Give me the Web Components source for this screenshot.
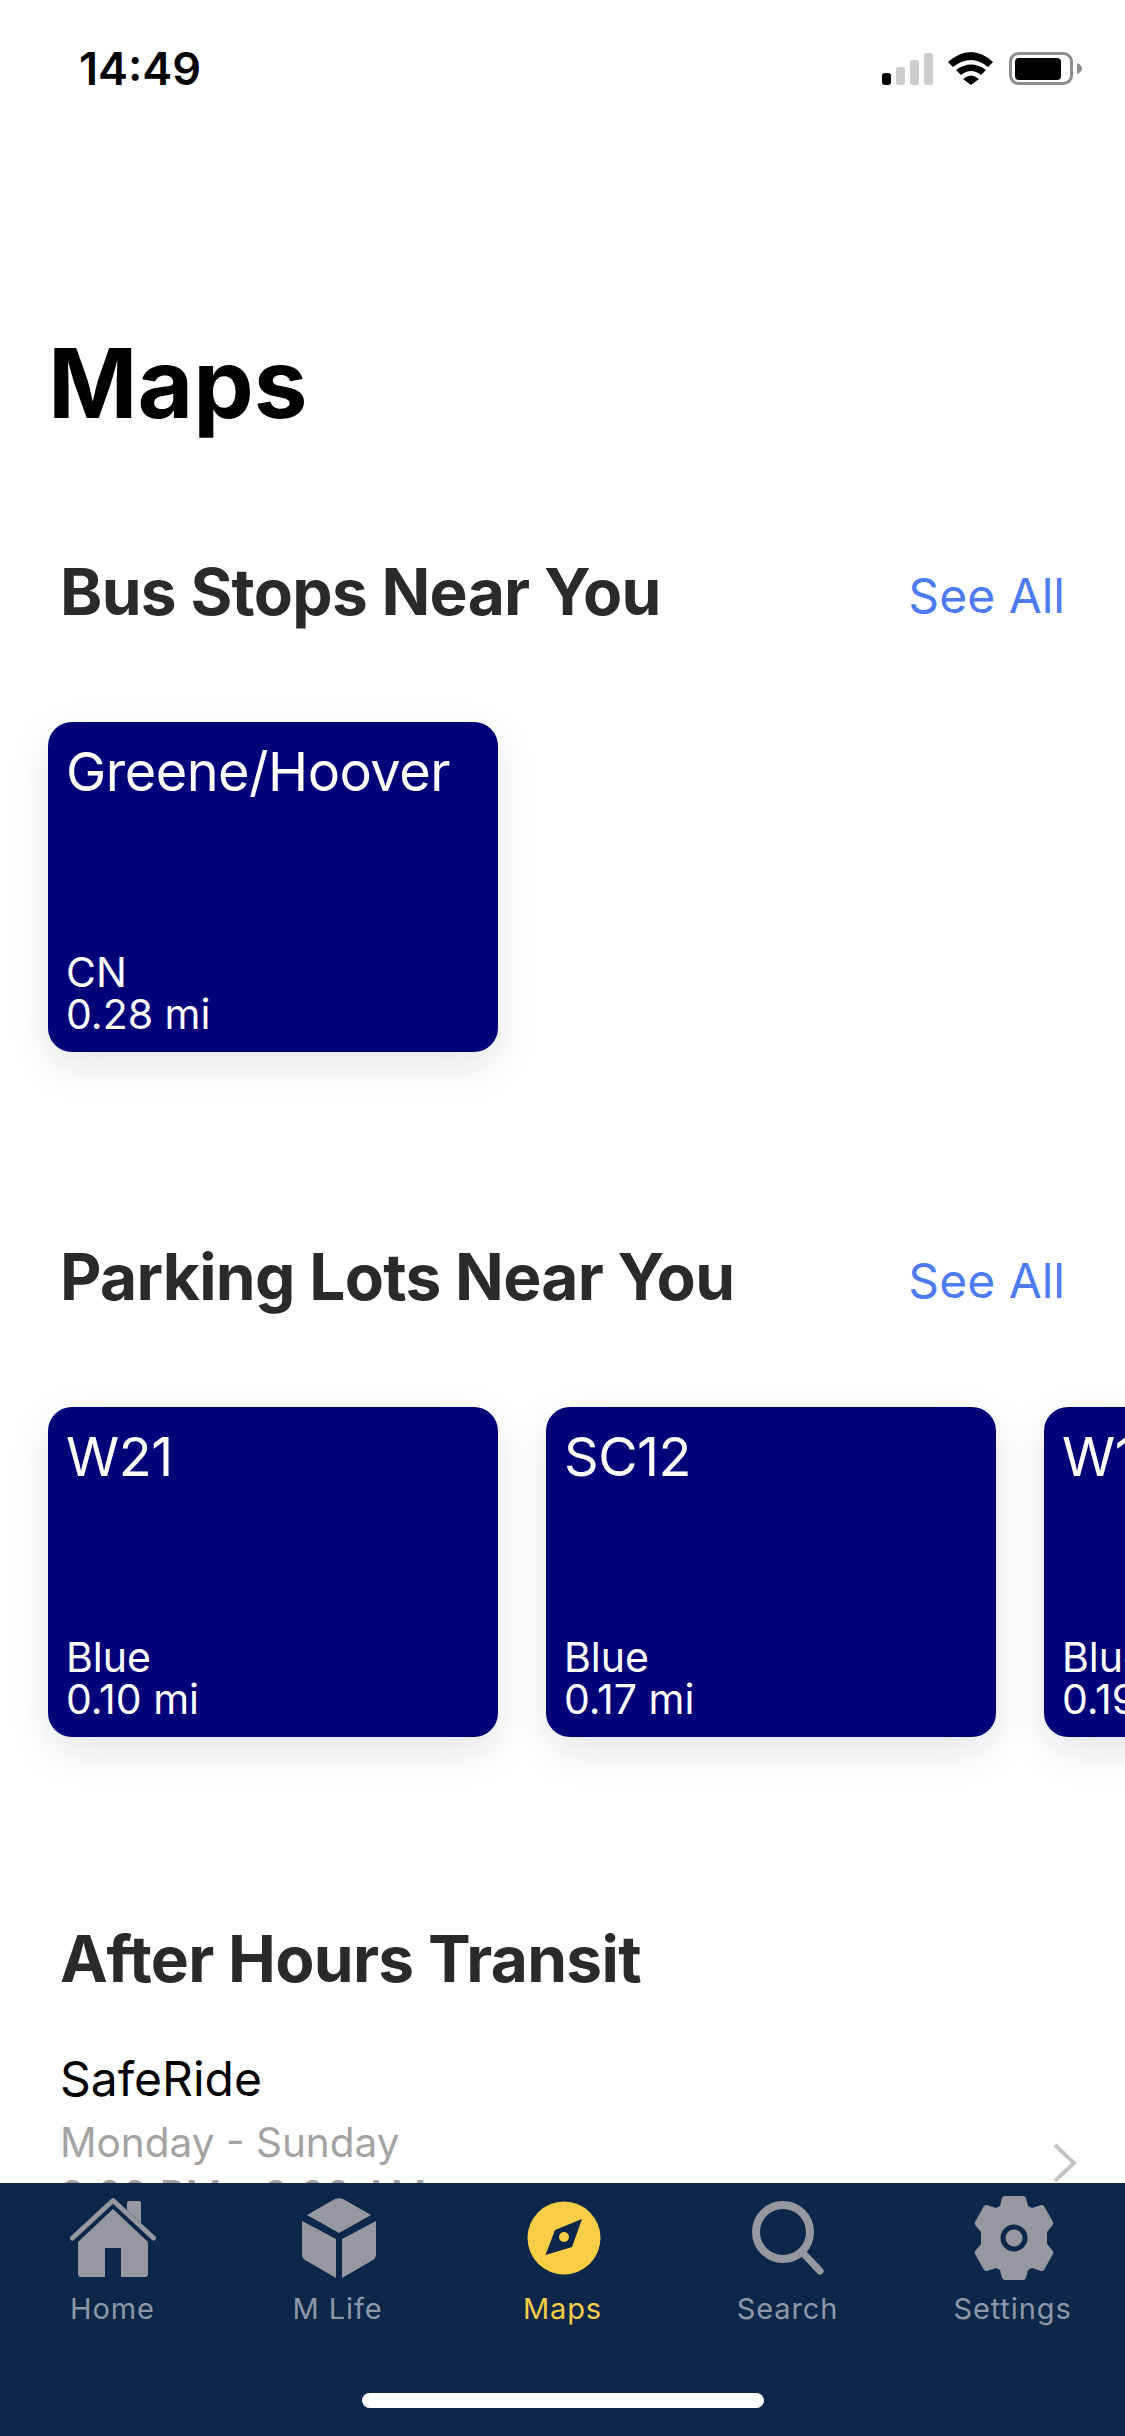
<!DOCTYPE html>
<html lang="en">
<head>
<meta charset="UTF-8">
<title>Maps</title>
<style>
  html, body { margin: 0; padding: 0; background: #fff; }
  body { width: 1125px; height: 2436px; overflow: hidden; font-family: Inter, "Liberation Sans", sans-serif; }
</style>
</head>
<body>

<app-screen>
  <status-bar slot="status" time="14:49"></status-bar>
  <page-title>Maps</page-title>

  <map-section heading="Bus Stops Near You" link="See All">
    <place-card name="Greene/Hoover" kind="CN" dist="0.28 mi"></place-card>
  </map-section>

  <map-section heading="Parking Lots Near You" link="See All">
    <place-card name="W21" kind="Blue" dist="0.10 mi"></place-card>
    <place-card name="SC12" kind="Blue" dist="0.17 mi"></place-card>
    <place-card name="W16" kind="Blue" dist="0.19 mi"></place-card>
  </map-section>

  <transit-section heading="After Hours Transit">
    <transit-row name="SafeRide" days="Monday - Sunday" hours="9:00 PM - 3:00 AM"></transit-row>
  </transit-section>

  <tab-bar slot="tabs"></tab-bar>
</app-screen>

<script>
  class AppScreen extends HTMLElement {
    constructor() {
      super();
      this.attachShadow({ mode: 'open' });
      this.shadowRoot.innerHTML = `
        <style>
          :host { display: flex; flex-direction: column; width: 1125px; height: 2436px; overflow: hidden; background: #fff; }
          .scroll { flex: 1; min-height: 0; overflow: hidden; }
        </style>
        <slot name="status"></slot>
        <div class="scroll"><slot></slot></div>
        <slot name="tabs"></slot>
      `;
    }
  }
  customElements.define('app-screen', AppScreen);

  class StatusBar extends HTMLElement {
    constructor() {
      super();
      this.attachShadow({ mode: 'open' });
      this.shadowRoot.innerHTML = `
        <style>
          :host { display: flex; justify-content: space-between; align-items: flex-start; height: 132px; box-sizing: border-box; padding: 43px 43px 0 79px; }
          .time { font: 600 45px/52px Inter, "Liberation Sans", sans-serif; color: #000; }
          svg { display: block; margin-top: 7px; }
        </style>
        <div class="time">${this.getAttribute('time')}</div>
        <svg width="201" height="36" viewBox="0 0 201 36">
          <rect x="1" y="23" width="9" height="12" rx="3" fill="#000"/>
          <rect x="15" y="17" width="9" height="18" rx="2.5" fill="#cdcdcd"/>
          <rect x="29" y="10" width="9" height="25" rx="2.5" fill="#cdcdcd"/>
          <rect x="43" y="3" width="9" height="32" rx="2.5" fill="#cdcdcd"/>
          <path d="M67 12 Q90 -8 112 12 L107 17 Q90 3 72 17Z" fill="#000"/>
          <path d="M75 20 Q90 9 105 20 L100 25 Q90 17 80 25Z" fill="#000"/>
          <path d="M82 29 Q90 22 98 29 L90 35Z" fill="#000"/>
          <rect x="129.500" y="3.500" width="61" height="30" rx="8" fill="none" stroke="#8e8e8e" stroke-width="3"/>
          <rect x="134" y="8" width="46" height="22" rx="4" fill="#000"/>
          <path d="M196 13 Q201 15 201 18.500 Q201 22 196 24Z" fill="#8e8e8e"/>
        </svg>
      `;
    }
  }
  customElements.define('status-bar', StatusBar);

  class PageTitle extends HTMLElement {
    constructor() {
      super();
      this.attachShadow({ mode: 'open' });
      this.shadowRoot.innerHTML = `
        <style>
          :host { display: block; padding: 191px 0 0 48px; font: 700 96px/120px Inter, "Liberation Sans", sans-serif; color: #000; }
        </style>
        <slot></slot>
      `;
    }
  }
  customElements.define('page-title', PageTitle);

  class MapSection extends HTMLElement {
    constructor() {
      super();
      this.attachShadow({ mode: 'open' });
      this.shadowRoot.innerHTML = `
        <style>
          :host { display: block; margin-top: 105px; margin-bottom: 131px; }
          .head { display: flex; justify-content: space-between; align-items: center; padding: 0 60px 0 60px; height: 90px; }
          h2 { margin: -3px 0 0; font: 700 64px/76px Inter, "Liberation Sans", sans-serif; color: #2a2a2a; letter-spacing: -0.7px; }
          a { font: 400 48px/60px Inter, "Liberation Sans", sans-serif; color: #4d7cf0; padding-top: 6px; }
          .row { display: flex; gap: 48px; padding: 84px 0 0 48px; overflow: hidden; }
        </style>
        <div class="head">
          <h2>${this.getAttribute('heading')}</h2>
          <a>${this.getAttribute('link')}</a>
        </div>
        <div class="row"><slot></slot></div>
      `;
    }
  }
  customElements.define('map-section', MapSection);

  class PlaceCard extends HTMLElement {
    constructor() {
      super();
      this.attachShadow({ mode: 'open' });
      this.shadowRoot.innerHTML = `
        <style>
          :host { display: flex; flex-direction: column; justify-content: space-between; flex: 0 0 auto; width: 450px; height: 330px; box-sizing: border-box; padding: 20px 18px 17px 18px; border-radius: 24px; background: #000078; color: #fff; box-shadow: 0 14px 40px rgba(30, 40, 70, 0.12); margin-bottom: 50px; }
          .name { font: 400 54px/60px Inter, "Liberation Sans", sans-serif; white-space: nowrap; letter-spacing: -0.5px; }
          .sub { font: 400 41px/42px Inter, "Liberation Sans", sans-serif; }
        </style>
        <div class="name">${this.getAttribute('name')}</div>
        <div class="sub">${this.getAttribute('kind')}<br>${this.getAttribute('dist')}</div>
      `;
    }
  }
  customElements.define('place-card', PlaceCard);

  class TransitSection extends HTMLElement {
    constructor() {
      super();
      this.attachShadow({ mode: 'open' });
      this.shadowRoot.innerHTML = `
        <style>
          :host { display: block; padding-top: 3px; }
          h2 { margin: 0; padding-left: 60px; font: 700 64px/76px Inter, "Liberation Sans", sans-serif; color: #2a2a2a; letter-spacing: -0.7px; }
        </style>
        <h2>${this.getAttribute('heading')}</h2>
        <slot></slot>
      `;
    }
  }
  customElements.define('transit-section', TransitSection);

  class TransitRow extends HTMLElement {
    constructor() {
      super();
      this.attachShadow({ mode: 'open' });
      this.shadowRoot.innerHTML = `
        <style>
          :host { display: flex; align-items: flex-start; justify-content: space-between; padding: 52px 48px 0 60px; }
          .name { font: 400 48px/60px Inter, "Liberation Sans", sans-serif; color: #000; }
          .line { font: 400 40.5px/53px Inter, "Liberation Sans", sans-serif; color: #a3a3a3; }
          .days { margin-top: 7px; }
          svg { display: block; margin-top: 94px; }
        </style>
        <div>
          <div class="name">${this.getAttribute('name')}</div>
          <div class="line days">${this.getAttribute('days')}</div>
          <div class="line">${this.getAttribute('hours')}</div>
        </div>
        <svg width="24" height="40" viewBox="0 0 24 40"><path d="M2 2 L21 20 L2 38" fill="none" stroke="#c4c4c4" stroke-width="4"/></svg>
      `;
    }
  }
  customElements.define('transit-row', TransitRow);

  const ICONS = {
    home: `<svg width="86" height="82" viewBox="0 0 86 82">
      <path d="M59 4 h10 a2 2 0 0 1 2 2 v20 l-14 -13 v-7 a2 2 0 0 1 2 -2z" fill="#97989f"/>
      <path d="M2.500 41 L43 3.500 L83.500 41" fill="none" stroke="#97989f" stroke-width="5" stroke-linecap="round" stroke-linejoin="round"/>
      <path d="M43 12 L78 45 V77 a3 3 0 0 1 -3 3 H51 V51 H35 V80 H11 a3 3 0 0 1 -3 -3 V45 Z" fill="#97989f"/>
    </svg>`,
    cube: `<svg width="74" height="80" viewBox="0 0 74 80" style="margin-left:3px">
      <path d="M32 1.500 Q37 -1 42 1.500 L69 17 L37 35 L5 17Z" fill="#97989f"/>
      <path d="M0 23 L34 41 V80 L3 62 Q0 60 0 56Z" fill="#97989f"/>
      <path d="M74 23 L40 41 V80 L71 62 Q74 60 74 56Z" fill="#97989f"/>
    </svg>`,
    compass: `<svg width="74" height="74" viewBox="0 0 74 74" style="margin-left:3px">
      <circle cx="37" cy="37" r="36.500" fill="#f9cd47"/>
      <path d="M55 18 L45 46 L18.500 54 L28 29Z" fill="#0c2749"/>
      <circle cx="37" cy="36" r="5" fill="#f9cd47"/>
    </svg>`,
    search: `<svg width="74" height="74" viewBox="0 0 74 74" style="margin-left:3px">
      <circle cx="31" cy="31" r="27" fill="none" stroke="#97989f" stroke-width="8"/>
      <path d="M50 51 L68 70" fill="none" stroke="#97989f" stroke-width="7" stroke-linecap="round"/>
    </svg>`,
    gear: `<svg width="80" height="84" viewBox="0 0 80 84" style="margin-left:3px">
      <path fill="#97989f" d="M28 2 Q29 0 31 0 H49 Q51 0 52 2 L54 10 L58 12 L67 9 Q69 9 70 10 L79 26 Q80 28 78 30 L73 36 V48 L78 54 Q80 56 79 58 L70 74 Q69 75 67 75 L58 72 L54 74 L52 82 Q51 84 49 84 H31 Q29 84 28 82 L26 74 L22 72 L13 75 Q11 75 10 74 L1 58 Q0 56 2 54 L7 48 V36 L2 30 Q0 28 1 26 L10 10 Q11 9 13 9 L22 12 L26 10 Z"/>
      <circle cx="40" cy="42" r="13.500" fill="#0c2749"/>
      <circle cx="40" cy="42" r="8.500" fill="#97989f"/>
    </svg>`
  };

  class TabItem extends HTMLElement {
    constructor() {
      super();
      this.attachShadow({ mode: 'open' });
      const active = this.hasAttribute('active');
      this.shadowRoot.innerHTML = `
        <style>
          :host { display: flex; flex-direction: column; align-items: center; flex: 1; }
          .icon { height: 86px; display: flex; align-items: center; justify-content: center; }
          span { font: 400 29px/36px Inter, "Liberation Sans", sans-serif; letter-spacing: 0.9px; color: ${active ? '#f9cd47' : '#8e97a8'}; margin-top: 10px; }
        </style>
        <div class="icon">${ICONS[this.getAttribute('icon')]}</div>
        <span>${this.getAttribute('label')}</span>
      `;
    }
  }
  customElements.define('tab-item', TabItem);

  class TabBar extends HTMLElement {
    constructor() {
      super();
      this.attachShadow({ mode: 'open' });
      this.shadowRoot.innerHTML = `
        <style>
          :host { display: flex; flex-direction: column; height: 253px; box-sizing: border-box; padding-top: 12px; background: #0c2749; }
          .items { display: flex; }
          .pill { width: 402px; height: 15px; border-radius: 8px; background: #fff; margin: 66px auto 0; }
        </style>
        <div class="items">
          <tab-item icon="home" label="Home"></tab-item>
          <tab-item icon="cube" label="M Life"></tab-item>
          <tab-item icon="compass" label="Maps" active></tab-item>
          <tab-item icon="search" label="Search"></tab-item>
          <tab-item icon="gear" label="Settings"></tab-item>
        </div>
        <div class="pill"></div>
      `;
    }
  }
  customElements.define('tab-bar', TabBar);
</script>
</body>
</html>
